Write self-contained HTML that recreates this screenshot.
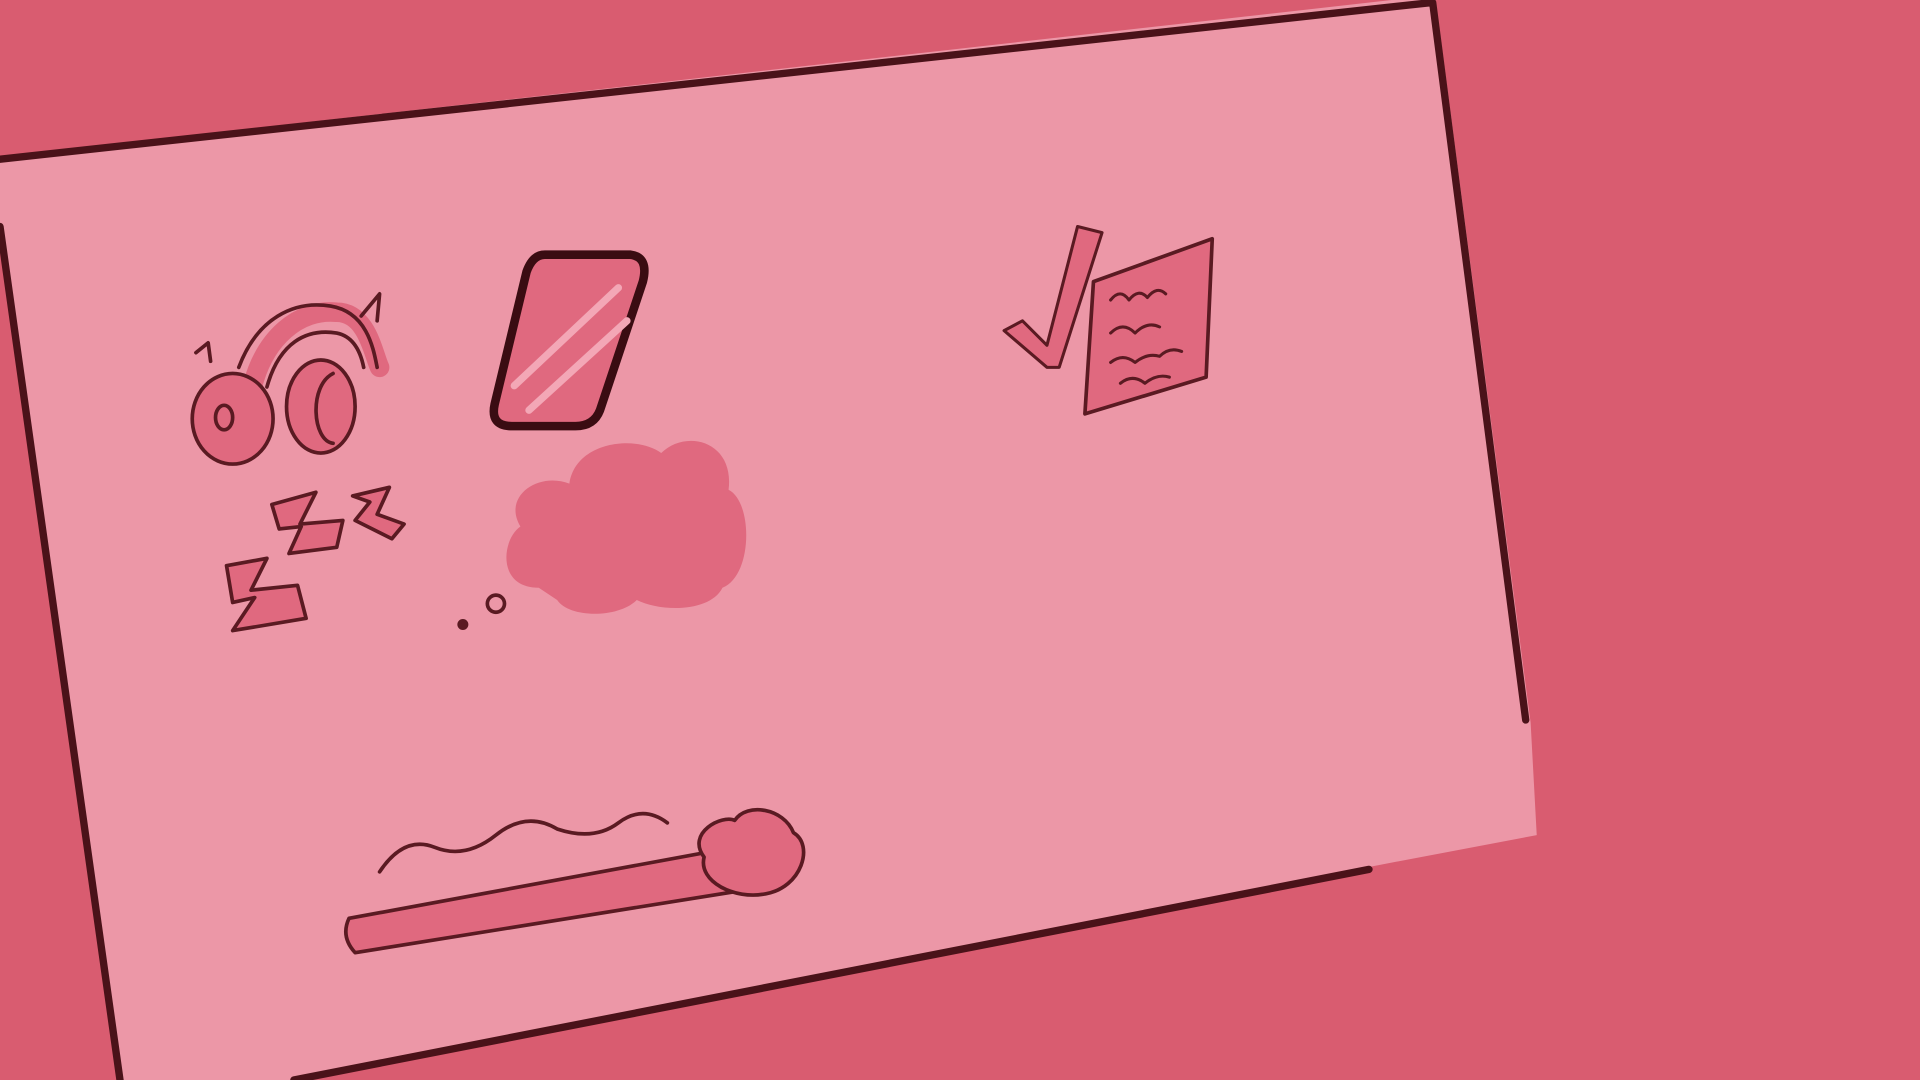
<!DOCTYPE html>
<html><head><meta charset="utf-8"><style>
html,body{margin:0;padding:0;background:#d95c70;overflow:hidden}
svg{display:block}
</style></head><body>
<svg width="1920" height="1080" viewBox="0 0 1568 882" preserveAspectRatio="none" xmlns="http://www.w3.org/2000/svg">
<rect width="1568" height="882" fill="#d95c70"/>
<!-- board -->
<polygon points="0,128 1172,-4 1250,590 1255,682 1118,708 240,882 98,882 0,185" fill="#ec97a7"/>
<g fill="none" stroke="#4a1219" stroke-width="6" stroke-linecap="round" stroke-linejoin="round">
<polyline points="0,130 1170,2 1246,588"/>
<polyline points="0,185 98,882"/>
<polyline points="1118,710 240,882"/>
</g>
<g stroke="#5a1a22" stroke-width="3" stroke-linecap="round" stroke-linejoin="round">
<!-- headphones -->
<path d="M205,320 C215,275 245,252 275,255 C300,255 305,290 310,300" fill="none" stroke="#e0697f" stroke-width="16"/>
<path d="M195,300 C210,260 240,245 270,250 C300,255 305,285 308,300" fill="none"/>
<path d="M218,316 C228,280 250,268 275,272 C290,275 295,290 297,300" fill="none"/>
<ellipse cx="190" cy="342" rx="33" ry="37" fill="#e0697f"/>
<ellipse cx="183" cy="341" rx="7" ry="10" fill="none"/>
<ellipse cx="262" cy="332" rx="28" ry="38" fill="#e0697f"/>
<path d="M272,305 C252,315 255,360 272,362" fill="none"/>
<path d="M160,288 L170,280 L172,295" fill="none"/>
<path d="M295,258 L310,240 L308,262" fill="none"/>
<!-- phone -->
<path d="M445,208 L515,208 Q530,210 525,230 L490,335 Q485,348 470,348 L418,348 Q400,348 404,330 L430,222 Q435,208 445,208 Z" fill="#e0697f" stroke="#3a0c12" stroke-width="7"/>
<path d="M420,315 L505,235 M432,335 L512,262" stroke="#f3a7b6" stroke-width="6"/>
<!-- zzz -->
<path d="M185,462 L218,456 L205,482 L243,478 L250,505 L190,515 L208,488 L190,492 Z" fill="#e0697f"/>
<path d="M222,412 L258,402 L245,428 L280,425 L275,447 L236,452 L246,430 L228,432 Z" fill="#e0697f"/>
<path d="M288,405 L318,398 L308,420 L330,428 L320,440 L290,425 L302,410 Z" fill="#e0697f"/>
<!-- cloud -->
<path d="M440,480 C405,480 410,440 425,430 C410,405 440,385 465,395 C470,360 520,355 540,370 C560,350 600,360 595,400 C615,410 615,470 590,480 C580,500 540,500 520,490 C505,505 465,505 455,490 Z" fill="#e0697f" stroke="none"/>
<circle cx="405" cy="493" r="7" fill="none"/>
<circle cx="378" cy="510" r="3" fill="#5a1a22"/>
<!-- check + doc -->
<path d="M820,270 L835,262 L855,282 L880,185 L900,190 L865,300 L855,300 Z" fill="#e0697f" stroke-width="2.5"/>
<path d="M893,230 L990,195 L985,308 L886,338 Z" fill="#e0697f"/>
<path d="M907,245 q8,-10 15,0 q8,-10 15,-2 q8,-10 15,-3 M907,272 q10,-10 20,0 q10,-10 20,-5 M907,296 q10,-8 20,0 q10,-8 20,-5 q8,-8 18,-4 M915,313 q10,-8 20,0 q10,-8 20,-5" fill="none" stroke-width="2.5"/>
<!-- cigarette -->
<path d="M285,750 L610,690 L620,725 L290,778 Q278,765 285,750 Z" fill="#e0697f"/>
<path d="M575,700 C560,680 590,665 600,670 C610,655 640,660 648,680 C665,690 655,725 625,730 C600,735 570,720 575,700 Z" fill="#e0697f"/>
<path d="M310,712 q20,-30 45,-20 q25,10 50,-10 q25,-20 50,-5 q30,10 50,-5 q20,-15 40,0" fill="none" stroke-width="3"/>
</g>
</svg>
</body></html>
